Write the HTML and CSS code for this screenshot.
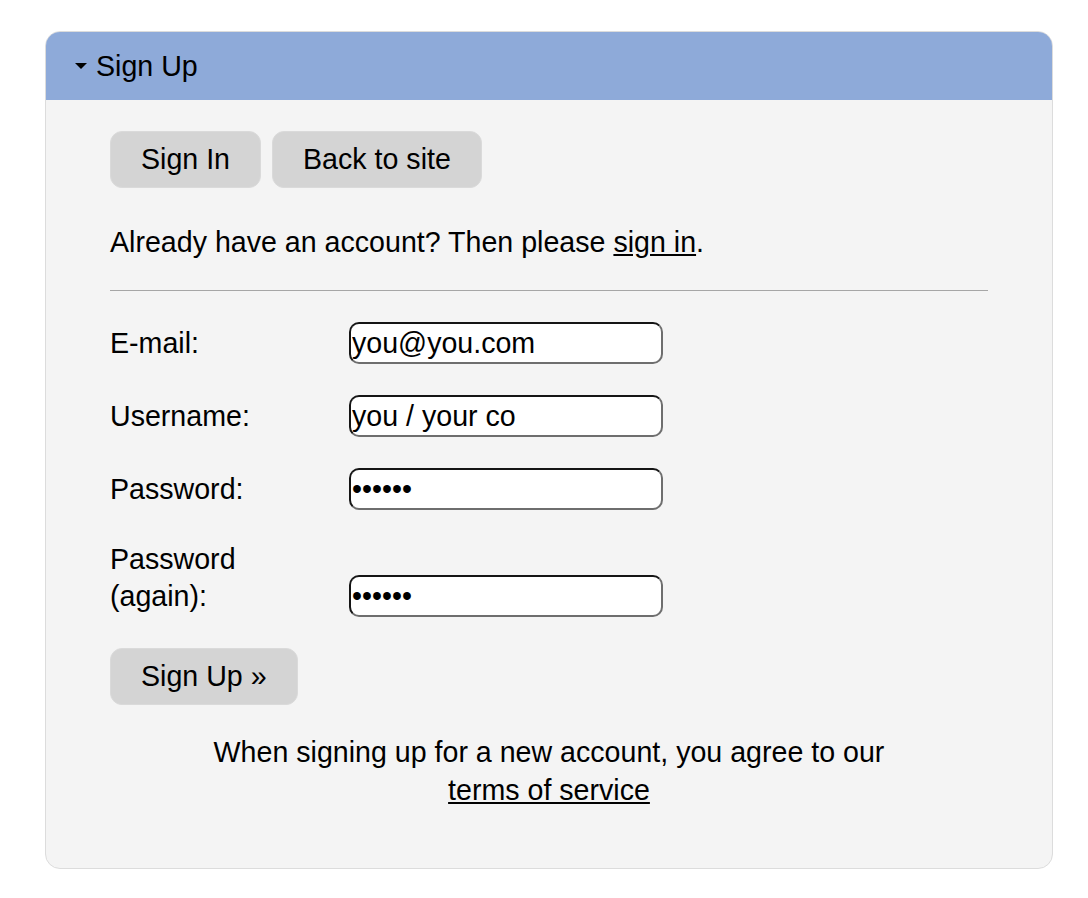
FILE: index.html
```html
<!DOCTYPE html>
<html lang="en">

<head>
    <meta charset="UTF-8">
    <meta name="viewport" content="width=device-width, initial-scale=1.0">
    <title>Sign Up</title>
    <link rel="stylesheet" href="styles.css">
</head>

<body>
    <div class="panel">
        <!-- Header -->
        <div class="panel-header">
            <span class="caret"></span>
            <span>Sign Up</span>
        </div>

        <div class="panel-body">
            <div class="top-buttons">
                <button class="btn">Sign In</button>
                <button class="btn">Back to site</button>
            </div>

            <p class="intro">Already have an account? Then please <a href="#">sign in</a>.</p>

            <hr>

            <!-- Signup form -->
            <form class="signup-form">
                <label for="email">E-mail:</label>
                <input type="email" id="email" value="you@you.com">

                <label for="username">Username:</label>
                <input type="text" id="username" value="you / your co">

                <label for="password1">Password:</label>
                <input type="password" id="password1" value="secret">

                <label for="password2">Password (again):</label>
                <input type="password" id="password2" value="secret">
            </form>

            <button class="btn submit">Sign Up &raquo;</button>

            <p class="terms">When signing up for a new account, you agree to our <a href="#">terms of service</a></p>
        </div>
    </div>
</body>

</html>
```

FILE: styles.css
```css
* {
    box-sizing: border-box;
    margin: 0;
    padding: 0;
    font-family: "Liberation Sans", Arial, sans-serif;
}

body {
    background: #ffffff;
    color: #000;
    font-size: 28.6px;
    line-height: 38px;
}

a {
    color: #000;
    text-decoration: underline;
}

/* Panel */

.panel {
    width: 1008px;
    margin: 31px 0 0 45px;
    background: #f4f4f4;
    border: 1px solid #dcdcdc;
    border-radius: 15px;
    overflow: hidden;
}

.panel-header {
    height: 69px;
    margin: -1px -1px 0 -1px;
    background: #8eaad9;
    display: flex;
    align-items: center;
    padding-left: 30px;
    gap: 9px;
}

.caret {
    width: 0;
    height: 0;
    border-left: 6px solid transparent;
    border-right: 6px solid transparent;
    border-top: 6px solid #000;
    margin-top: 1px;
}

.panel-body {
    padding: 31px 64px 59px 64px;
}

/* Buttons */

.top-buttons {
    display: flex;
    gap: 11px;
}

.btn {
    background: #d4d4d4;
    border: 1px solid #dadada;
    border-radius: 12px;
    padding: 12px 30px;
    font-size: 28.6px;
    line-height: 31px;
    color: #000;
    cursor: pointer;
}

.intro {
    margin-top: 35px;
}

hr {
    border: none;
    border-top: 1px solid #a6a6a6;
    margin: 29px 0 31px 0;
}

/* Form */

.signup-form {
    display: grid;
    grid-template-columns: 200px 314px;
    column-gap: 39px;
    row-gap: 31px;
    align-items: end;
}

.signup-form label {
    padding-bottom: 2px;
    line-height: 37px;
}

.signup-form input {
    height: 42px;
    width: 314px;
    font-size: 28.6px;
    padding: 0 1px;
    background: #fff;
    border: 2px solid;
    border-color: #151515 #6e6e6e #6e6e6e #151515;
    border-radius: 10px;
    outline: none;
    color: #000;
}

.submit {
    margin-top: 31px;
}

.terms {
    max-width: 700px;
    margin: 28px auto 0 auto;
    text-align: center;
}
```
